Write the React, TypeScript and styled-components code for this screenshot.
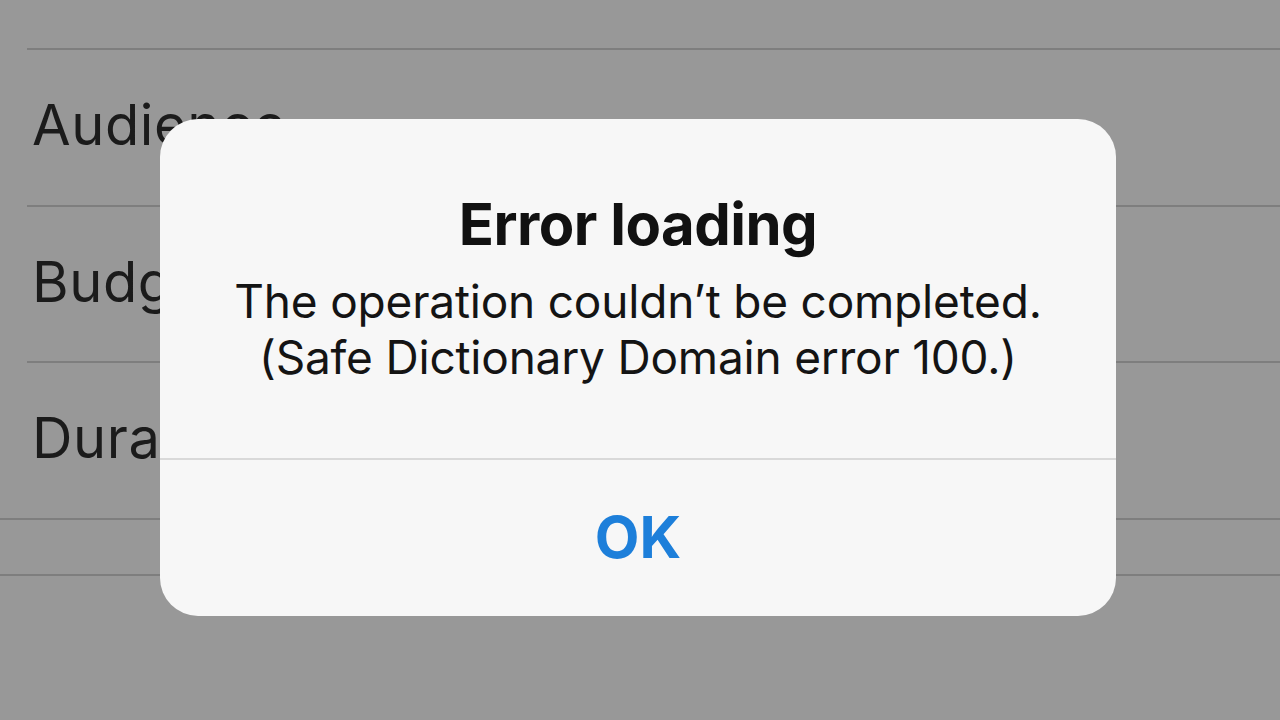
import React from 'react';
import styled, { createGlobalStyle } from 'styled-components';

const GlobalStyle = createGlobalStyle`
    html, body {
        margin: 0;
        padding: 0;
        background: #989898;
        font-family: Inter, "Noto Sans", "Liberation Sans", sans-serif;
        overflow: hidden;
    }
`;

// Settings list behind the alert
const Screen = styled.div`
    width: 1280px;
    height: 720px;
    background: #989898;
    position: relative;
    overflow: hidden;
`;

const TopSpacer = styled.div`
    height: 48px;
`;

const Section = styled.div`
    border-bottom: 2px solid #7e7e7e;
`;

const Row = styled.div`
    box-sizing: border-box;
    height: 156.5px;
    margin-left: 27px;
    border-top: 2px solid #7e7e7e;
    display: flex;
    align-items: center;
    padding-left: 5px;
    padding-bottom: 4px;
`;

const RowLabel = styled.span`
    font-size: 56px;
    color: #1b1b1b;
    letter-spacing: 0.6px;
`;

const SectionGap = styled.div`
    height: 54px;
    border-bottom: 2px solid #7e7e7e;
`;

// Alert
const Overlay = styled.div`
    position: absolute;
    inset: 0;
    display: flex;
    justify-content: center;
    align-items: flex-start;
    padding-top: 119px;
    padding-right: 4px;
`;

const Alert = styled.div`
    width: 956px;
    height: 497px;
    background: #f7f7f7;
    border-radius: 38px;
    display: flex;
    flex-direction: column;
    overflow: hidden;
`;

const Body = styled.div`
    height: 341px;
    box-sizing: border-box;
    padding-top: 70px;
    display: flex;
    flex-direction: column;
    align-items: center;
    border-bottom: 2px solid #d9d9d9;
`;

const Title = styled.div`
    font-size: 58px;
    line-height: 70px;
    font-weight: 700;
    color: #111;
    letter-spacing: -0.5px;
`;

const Message = styled.div`
    margin-top: 14px;
    font-size: 46px;
    line-height: 56px;
    color: #141414;
    text-align: center;
    letter-spacing: -0.2px;
`;

const Button = styled.div`
    flex: 1;
    display: flex;
    align-items: center;
    justify-content: center;
    font-size: 58px;
    font-weight: 700;
    color: #1d7fda;
    padding-bottom: 2px;
`;

const rows = ['Audience', 'Budget', 'Duration'];

const App: React.FC = () => {
    return (
        <>
            <GlobalStyle />
            <Screen>
                <TopSpacer />
                <Section>
                    {rows.map((label) => (
                        <Row key={label}>
                            <RowLabel>{label}</RowLabel>
                        </Row>
                    ))}
                </Section>
                <SectionGap />
                <Overlay>
                    <Alert>
                        <Body>
                            <Title>Error loading</Title>
                            <Message>
                                The operation couldn’t be completed.
                                <br />
                                (Safe Dictionary Domain error 100.)
                            </Message>
                        </Body>
                        <Button>OK</Button>
                    </Alert>
                </Overlay>
            </Screen>
        </>
    );
};

export default App;
